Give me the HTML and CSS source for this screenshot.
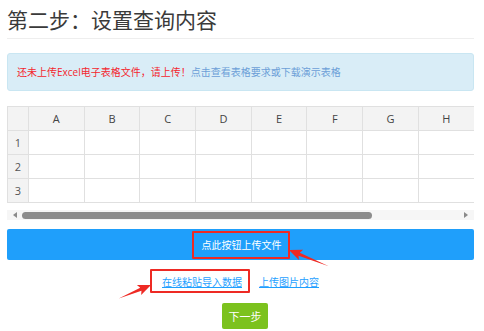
FILE: index.html
```html
<!DOCTYPE html>
<html lang="zh-CN">
<head>
  <meta charset="UTF-8" />
  <title>第二步：设置查询内容</title>
  <link rel="stylesheet" href="styles.css">
</head>
<body>
  <div class="page">
    <h1 class="step-title">第二步：设置查询内容</h1>

    <div class="alert">
      <span class="alert-warn">还未上传Excel电子表格文件，请上传！</span><a class="alert-link" href="#">点击查看表格要求或下载演示表格</a>
    </div>

    <table class="sheet">
      <colgroup>
        <col class="col-num">
        <col span="8">
      </colgroup>
      <thead>
        <tr><th></th><th>A</th><th>B</th><th>C</th><th>D</th><th>E</th><th>F</th><th>G</th><th>H</th></tr>
      </thead>
      <tbody>
        <tr><th>1</th><td></td><td></td><td></td><td></td><td></td><td></td><td></td><td></td></tr>
        <tr><th>2</th><td></td><td></td><td></td><td></td><td></td><td></td><td></td><td></td></tr>
        <tr><th>3</th><td></td><td></td><td></td><td></td><td></td><td></td><td></td><td></td></tr>
      </tbody>
    </table>

    <div class="hscroll">
      <span class="arrow-left"></span>
      <span class="thumb"></span>
      <span class="arrow-right"></span>
    </div>

    <button class="btn-upload"><span class="mark mark-btn">点此按钮上传文件</span></button>

    <div class="links">
      <span class="mark mark-link"><a href="#">在线粘贴导入数据</a></span>
      <a href="#">上传图片内容</a>
    </div>

    <div class="next-row">
      <button class="btn-next">下一步</button>
    </div>

    <!-- Markierungspfeile -->
    <svg class="arrows" width="484" height="331" viewBox="0 0 484 331">
      <g transform="translate(289 250) rotate(22.3)">
        <polygon points="0,0 13,-5.5 11,-1.6 43,0 11,1.6 13,5.5" fill="#ee2a24" />
      </g>
      <g transform="translate(151 285) rotate(157.2)">
        <polygon points="0,0 13,-5.5 11,-1.6 35,0 11,1.6 13,5.5" fill="#ee2a24" />
      </g>
    </svg>
  </div>
</body>
</html>
```

FILE: styles.css
```css
body {
  margin: 0;
  font-family: "Open Sans", "Noto Sans CJK SC", sans-serif;
  color: #333;
  background: #fff;
}

.page {
  position: relative;
  width: 467px;
  padding: 0 10px 0 7px;
}

.step-title {
  margin: 0;
  padding: 6px 0 3px;
  font-size: 21px;
  line-height: 29px;
  font-weight: normal;
  color: #3a3a3a;
  border-bottom: 1px solid #eee;
}

/* Hinweisbox */
.alert {
  margin-top: 14px;
  padding: 10px 9px;
  line-height: 16px;
  font-size: 10px;
  background: #d9edf7;
  border: 1px solid #c9e6f2;
  border-radius: 3px;
}

.alert-warn {
  color: #f4262e;
}

.alert-link {
  margin-left: 0;
  color: #6c9fd8;
  text-decoration: none;
}

/* Tabelle */
.sheet {
  margin-top: 15px;
  width: 467px;
  table-layout: fixed;
  border-collapse: collapse;
  font-size: 11px;
}

.sheet .col-num {
  width: 21px;
}

.sheet th,
.sheet td {
  height: 23px;
  padding: 0;
  border: 1px solid #e0e0e0;
  text-align: center;
  font-weight: normal;
}

.sheet th {
  background: #f3f3f3;
  color: #444;
}

.sheet tbody th {
  color: #555;
}

.sheet tr > :last-child {
  border-right: none;
}

/* Scrollbar */
.hscroll {
  margin-top: 7px;
  height: 10px;
  background: #f6f6f6;
  display: flex;
  align-items: center;
  padding: 0 6px;
}

.arrow-left {
  width: 0;
  height: 0;
  border-top: 3px solid transparent;
  border-bottom: 3px solid transparent;
  border-right: 4px solid #8a8a8a;
}

.thumb {
  margin-left: 5px;
  width: 350px;
  height: 7px;
  border-radius: 4px;
  background: #8c8c8c;
}

.arrow-right {
  margin-left: auto;
  width: 0;
  height: 0;
  border-top: 3px solid transparent;
  border-bottom: 3px solid transparent;
  border-left: 4px solid #8a8a8a;
}

/* Buttons */
.btn-upload {
  display: flex;
  justify-content: center;
  align-items: center;
  width: 100%;
  height: 31px;
  margin-top: 9px;
  padding: 0;
  border: none;
  border-radius: 2px;
  background: #1f9ffb;
  color: #fff;
  font-family: inherit;
  font-size: 10px;
}

.mark {
  display: inline-flex;
  align-items: center;
  border: 2px solid #ee2a24;
  border-radius: 1px;
}

.mark-btn {
  height: 24px;
  padding: 0 6px 0 8px;
}

.links {
  display: flex;
  justify-content: center;
  align-items: center;
  gap: 9px;
  margin-top: 9px;
  font-size: 10px;
}

.links a {
  color: #1e9fff;
}

.mark-link {
  height: 20px;
  padding: 0 6px 0 10px;
  margin: 0 -8px 0 -12px;
}

.mark-link + a {
  margin-left: 8px;
}

.next-row {
  display: flex;
  justify-content: center;
  margin-top: 10px;
  padding-left: 9px;
}

.btn-next {
  width: 46px;
  height: 26px;
  border: none;
  border-radius: 2px;
  background: #7cc21e;
  color: #fff;
  font-family: inherit;
  font-size: 11px;
}

.arrows {
  position: absolute;
  top: 0;
  left: 0;
  pointer-events: none;
}
```
